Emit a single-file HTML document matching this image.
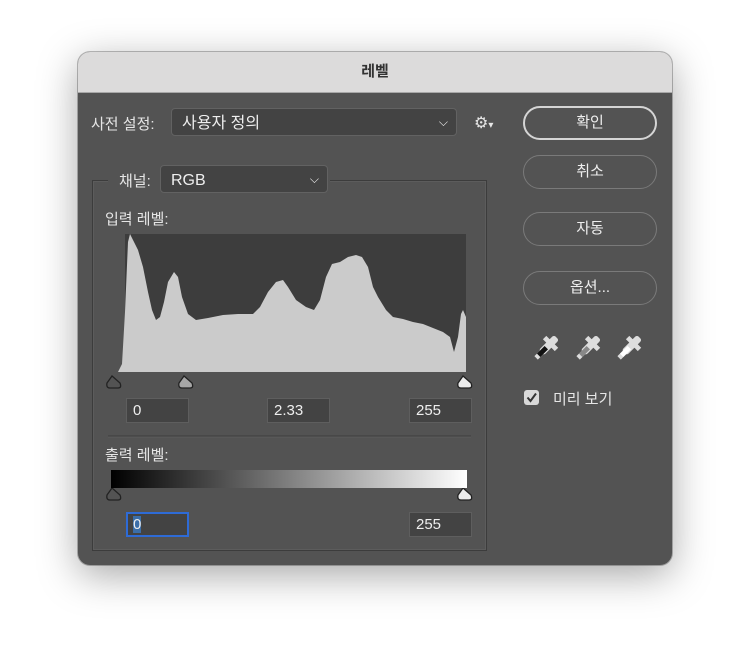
<html><head><style>
body{margin:0;width:750px;height:668px;background:#fff;font-family:"Liberation Sans","Noto Sans CJK KR",sans-serif;position:relative;overflow:hidden}
.dlg{position:absolute;left:78px;top:52px;width:594px;height:513px;border-radius:12px;background:#535353;overflow:hidden;box-shadow:0 10px 40px rgba(0,0,0,.35),0 0 0 1px rgba(0,0,0,.25)}
.title{height:40px;background:#dcdbdb;border-bottom:1px solid #a8a8a8;text-align:center;line-height:40px;font-size:15px;font-weight:bold;color:#333}
.a{position:absolute;color:#e6e6e6;font-size:15px}
.sel{position:absolute;background:#434343;border:1px solid #626262;border-radius:4px;color:#eee;font-size:16px;box-sizing:border-box;padding-left:10px}
.inp{position:absolute;background:#434343;border:1px solid #5e5e5e;color:#eee;font-size:15px;box-sizing:border-box;padding-left:6px;height:25px;line-height:23px;width:63px}
.btn{position:absolute;left:445px;width:134px;height:34px;border:1px solid #7a7a7a;border-radius:17px;box-sizing:border-box;text-align:center;line-height:32px;color:#eee;font-size:15px}
</style></head><body>
<div class="dlg">
<div class="title">레벨</div>
<div class="a" style="left:13px;top:61px">사전 설정:</div>
<div class="sel" style="left:93px;top:56px;width:286px;height:28px;line-height:30px">사용자 정의<span style="position:absolute;right:8px;top:-2px;font-size:12px">⌵</span></div>
<div class="a" style="left:396px;top:61px;font-size:16px">⚙<span style="font-size:10px">▾</span></div>
<div style="position:absolute;left:14px;top:128px;width:393px;height:369px;border:1px solid #3c3c3c;box-shadow:inset 0 0 0 1px #5c5c5c"></div>
<div style="position:absolute;left:30px;top:115px;width:222px;height:26px;background:#535353"></div>
<div class="a" style="left:41px;top:118px">채널:</div>
<div class="sel" style="left:82px;top:113px;width:168px;height:28px;line-height:30px">RGB<span style="position:absolute;right:8px;top:-2px;font-size:12px">⌵</span></div>
<div class="a" style="left:27px;top:156px">입력 레벨:</div>
<svg style="position:absolute;left:0;top:0" width="594" height="513">
<rect x="47" y="182" width="341" height="138" fill="#3d3d3d"/>
<polygon fill="#cbcbcb" points="40,320 44,312 47,260 50,190 52,182 55,188 60,198 65,215 70,240 74,258 78,268 82,265 86,250 90,230 96,220 100,225 104,245 110,262 118,268 130,266 145,263 160,262 175,262 182,255 190,240 198,230 205,228 210,235 218,248 228,255 236,258 242,248 248,225 254,212 262,210 270,205 278,203 284,205 290,215 295,235 300,245 308,258 315,265 325,267 335,270 345,272 355,276 365,280 372,285 376,300 380,285 383,262 385,258 388,265 388,320"/>
<g stroke="#222" stroke-width="1.3">
<path d="M34 324 L29 331 Q28 336 32 336 L40 336 Q44 336 42 331 Z" fill="#535353"/>
<path d="M106 324 L101 331 Q100 336 104 336 L112 336 Q116 336 114 331 Z" fill="#a6a6a6"/>
<path d="M385 324 L380 331 Q379 336 383 336 L391 336 Q395 336 393 331 Z" fill="#ececec"/>
<path d="M34 436 L29 443 Q28 448 32 448 L40 448 Q44 448 42 443 Z" fill="#535353"/>
<path d="M385 436 L380 443 Q379 448 383 448 L391 448 Q395 448 393 443 Z" fill="#ececec"/>
</g>
<line x1="30" y1="384" x2="393" y2="384" stroke="#3c3c3c"/>
<line x1="30" y1="385" x2="393" y2="385" stroke="#5e5e5e"/>
<defs><linearGradient id="g"><stop offset="0" stop-color="#000"/><stop offset="1" stop-color="#fff"/></linearGradient></defs>
<rect x="33" y="418" width="356" height="18" fill="url(#g)"/>
<g transform="translate(470,294) rotate(45) scale(1.2)"><rect x="-3" y="-10" width="6" height="18" rx="2" fill="#ddd"/><rect x="-7" y="-5" width="14" height="4" fill="#ddd"/><rect x="-2" y="8" width="4" height="6" fill="#ddd"/><rect x="-2" y="2" width="4" height="9" fill="#111"/></g>
<g transform="translate(512,294) rotate(45) scale(1.2)"><rect x="-3" y="-10" width="6" height="18" rx="2" fill="#ddd"/><rect x="-7" y="-5" width="14" height="4" fill="#ddd"/><rect x="-2" y="8" width="4" height="6" fill="#ddd"/><rect x="-2" y="2" width="4" height="9" fill="#888"/></g>
<g transform="translate(553,294) rotate(45) scale(1.2)"><rect x="-3" y="-10" width="6" height="18" rx="2" fill="#ddd"/><rect x="-7" y="-5" width="14" height="4" fill="#ddd"/><rect x="-2" y="8" width="4" height="6" fill="#ddd"/><rect x="-2" y="2" width="4" height="9" fill="#fff"/></g>
<rect x="446" y="338" width="15" height="15" rx="3" fill="#d8d8d8"/>
<path d="M449.5 345.5 L452.5 349 L458 341.5" stroke="#333" stroke-width="2" fill="none"/>
</svg>
<div class="inp" style="left:48px;top:346px">0</div>
<div class="inp" style="left:189px;top:346px">2.33</div>
<div class="inp" style="left:331px;top:346px">255</div>
<div class="a" style="left:27px;top:392px">출력 레벨:</div>
<div class="inp" style="left:48px;top:460px;border:2px solid #2e6bd6;line-height:21px;padding-left:5px"><span style="background:#3b6ea8">0</span></div>
<div class="inp" style="left:331px;top:460px">255</div>
<div class="btn" style="top:54px;border:2px solid #d5d5d5;line-height:30px">확인</div>
<div class="btn" style="top:103px">취소</div>
<div class="btn" style="top:160px">자동</div>
<div class="btn" style="top:219px">옵션...</div>
<div class="a" style="left:475px;top:336px">미리 보기</div>
</div>
</body></html>
